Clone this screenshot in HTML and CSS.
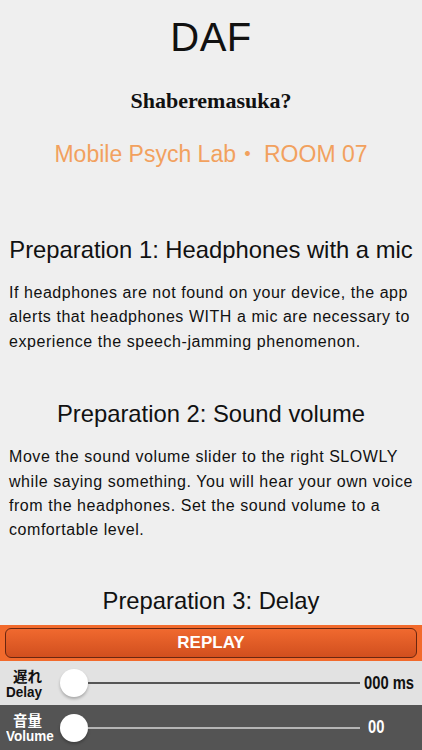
FILE: index.html
```html
<!DOCTYPE html>
<html>
<head>
<meta charset="utf-8">
<link rel="stylesheet" href="styles.css">
</head>
<body>
<div class="screen">
  <div class="content">
    <h1 class="title">DAF</h1>
    <div class="subtitle">Shaberemasuka?</div>
    <div class="lab">Mobile Psych Lab<span class="dot">・</span>ROOM 07</div>
    <h2 class="prep prep1">Preparation 1: Headphones with a mic</h2>
    <p class="para">If headphones are not found on your device, the app alerts that headphones WITH a mic are necessary to experience the speech-jamming phenomenon.</p>
    <h2 class="prep prep2">Preparation 2: Sound volume</h2>
    <p class="para">Move the sound volume slider to the right SLOWLY while saying something. You will hear your own voice from the headphones. Set the sound volume to a comfortable level.</p>
    <h2 class="prep prep3">Preparation 3: Delay</h2>
  </div>
  <div class="replay-bar">
    <button class="replay">REPLAY</button>
  </div>
  <div class="row row-delay">
    <div class="label"><span class="jp">遅れ</span><span class="en">Delay</span></div>
    <div class="slider"><div class="knob"></div><div class="track"></div></div>
    <div class="value"><span class="num">000 ms</span></div>
  </div>
  <div class="row row-volume">
    <div class="label"><span class="jp">音量</span><span class="en">Volume</span></div>
    <div class="slider"><div class="knob"></div><div class="track"></div></div>
    <div class="value"><span class="num">00</span></div>
  </div>
</div>
</body>
</html>
```
FILE: styles.css
```css
html, body {
  margin: 0;
  padding: 0;
}
body {
  width: 422px;
  height: 750px;
  overflow: hidden;
  background: #efefef;
  font-family: "Liberation Sans", "Noto Sans CJK JP", sans-serif;
  color: #111;
}
.screen {
  display: flex;
  flex-direction: column;
  height: 750px;
}
.content {
  flex: 1;
  overflow: hidden;
  display: flex;
  flex-direction: column;
  align-items: center;
  padding-top: 14px;
}
.title {
  margin: 0;
  font-weight: normal;
  font-size: 40px;
  line-height: 46px;
  letter-spacing: 0.5px;
}
.subtitle {
  margin-top: 29px;
  font-family: "Liberation Serif", "DejaVu Serif", serif;
  font-weight: bold;
  font-size: 22px;
  line-height: 24px;
}
.lab {
  margin-top: 27px;
  color: #f2a15e;
  font-size: 23px;
  line-height: 28px;
}
.dot {
  margin-left: 0;
  margin-right: 5px;
}
.prep {
  margin: 0;
  font-weight: normal;
  font-size: 23.8px;
  line-height: 28px;
  white-space: nowrap;
}
.prep1 { margin-top: 68px; }
.prep2 { margin-top: 46px; }
.prep3 { margin-top: 44px; }
.para {
  margin: 17px 0 0;
  align-self: stretch;
  padding: 0 9px;
  font-size: 16px;
  line-height: 24.4px;
  letter-spacing: 0.55px;
}
.replay-bar {
  background: #f26a2c;
  padding: 3px 5px 3px;
  height: 30px;
}
.replay {
  display: block;
  width: 100%;
  height: 30px;
  border: 1px solid #6a2610;
  border-radius: 6px;
  background: linear-gradient(#f0692f, #d14f1e);
  color: #fff;
  font-family: "Liberation Sans", sans-serif;
  font-weight: bold;
  font-size: 17px;
  padding: 0;
}
.row {
  display: flex;
  align-items: center;
}
.row-delay { height: 44px; background: #e2e2e2; color: #111; }
.row-volume { height: 45px; background: #545454; color: #fff; }
.label {
  width: 54px;
  padding-left: 6px;
  display: flex;
  flex-direction: column;
  align-items: flex-start;
  white-space: nowrap;
  position: relative;
  z-index: 1;
}
.jp {
  margin-left: 7px;
  font-family: "Noto Sans CJK JP", sans-serif;
  font-weight: bold;
  font-size: 14.5px;
  line-height: 16px;
}
.en {
  display: inline-block;
  font-family: "Liberation Sans", sans-serif;
  font-weight: bold;
  font-size: 15px;
  line-height: 14px;
  margin-top: 1px;
  transform: scaleX(0.9);
  transform-origin: left center;
}
.slider {
  flex: 1;
  display: flex;
  align-items: center;
}
.knob {
  width: 28px;
  height: 28px;
  border-radius: 50%;
  background: #fff;
  box-shadow: 0 2px 3px rgba(0,0,0,0.25);
  flex: none;
}
.track {
  flex: 1;
  height: 2px;
}
.row-delay .track { background: #555; }
.row-volume .track { background: #b5b5b5; }
.value {
  width: 62px;
  padding-left: 4px;
  box-sizing: border-box;
  white-space: nowrap;
}
.row-volume .value { padding-left: 8px; }
.num {
  display: inline-block;
  font-family: "Liberation Sans", sans-serif;
  font-weight: bold;
  font-size: 18px;
  transform: scaleX(0.82);
  transform-origin: left center;
}
```
